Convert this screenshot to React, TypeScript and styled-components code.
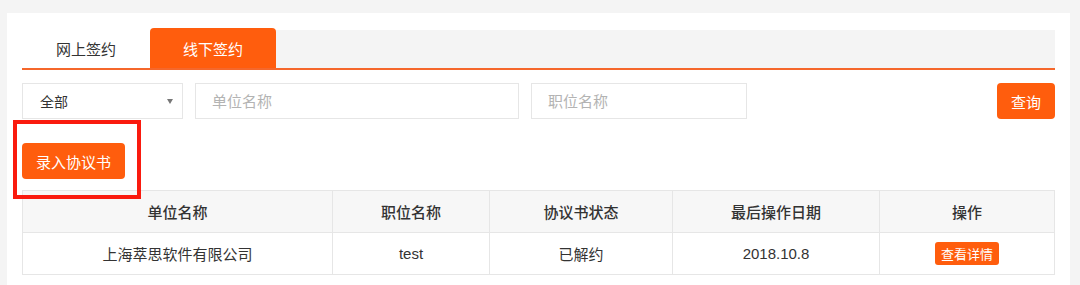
import React, { useState } from 'react';
import styled, { createGlobalStyle } from 'styled-components';

const ORANGE = '#ff5d0d';
const FONT = '"Liberation Sans", "Noto Sans CJK SC", sans-serif';

const GlobalStyle = createGlobalStyle`
  html, body {
    margin: 0;
    padding: 0;
    background: #f4f4f4;
    font-family: ${FONT};
  }
`;

const Page = styled.div`
  padding: 13px 10px 0 7px;
`;

const Card = styled.div`
  background: #fff;
  padding: 15px 15px 12px 15px;
  min-height: 260px;
  box-sizing: border-box;
`;

const TabBar = styled.div`
  display: flex;
  align-items: flex-end;
  height: 40px;
  border-bottom: 2px solid #f5672b;
  background: linear-gradient(to bottom, #fff 0, #fff 2px, #f4f4f4 2px);
`;

const Tab = styled.div<{ active?: boolean }>`
  width: ${(p) => (p.active ? '126px' : '128px')};
  height: 40px;
  display: flex;
  align-items: center;
  justify-content: center;
  font-size: 15px;
  color: ${(p) => (p.active ? '#fff' : '#333')};
  background: ${(p) => (p.active ? ORANGE : '#fff')};
  border-radius: ${(p) => (p.active ? '4px 4px 0 0' : '0')};
  cursor: pointer;
`;

const FilterRow = styled.div`
  display: flex;
  align-items: center;
  gap: 12px;
  margin-top: 13px;
  height: 36px;
`;

const SelectBox = styled.div`
  width: 161px;
  height: 36px;
  box-sizing: border-box;
  border: 1px solid #e6e6e6;
  display: flex;
  align-items: center;
  justify-content: space-between;
  padding: 0 9px 0 17px;
  font-size: 14px;
  color: #333;
`;

const Caret = styled.span`
  width: 0;
  height: 0;
  border-left: 3.5px solid transparent;
  border-right: 3.5px solid transparent;
  border-top: 5px solid #777;
`;

const Input = styled.input<{ w: number }>`
  width: ${(p) => p.w}px;
  height: 36px;
  box-sizing: border-box;
  border: 1px solid #e6e6e6;
  padding: 0 16px;
  font-size: 15px;
  font-family: ${FONT};
  color: #333;
  outline: none;
  &::placeholder {
    color: #b3b3b3;
  }
`;

const Spacer = styled.div`
  flex: 1;
`;

const Button = styled.button<{ small?: boolean }>`
  border: none;
  background: ${ORANGE};
  color: #fff;
  font-family: ${FONT};
  font-size: ${(p) => (p.small ? '13px' : '15px')};
  height: ${(p) => (p.small ? '23px' : '36px')};
  padding: ${(p) => (p.small ? '0 6px' : '0 14px')};
  border-radius: ${(p) => (p.small ? '3px' : '4px')};
  cursor: pointer;
  white-space: nowrap;
`;

const ActionRow = styled.div`
  margin-top: 24px;
  display: flex;
`;

const Highlight = styled.div`
  position: relative;
  display: inline-flex;
`;

const HighlightFrame = styled.div`
  position: absolute;
  left: -9px;
  top: -23px;
  right: -16px;
  bottom: -20px;
  border: 4px solid #fa1a0e;
  pointer-events: none;
`;

const Table = styled.table`
  margin-top: 11px;
  width: 100%;
  border-collapse: collapse;
  font-size: 15px;
  color: #333;
  th,
  td {
    border: 1px solid #e6e6e6;
    text-align: center;
    height: 41px;
    padding: 0;
  }
  th {
    background: #f7f7f7;
    font-weight: 500;
    color: #333;
  }
`;

const columns = [
  { title: '单位名称', width: 310 },
  { title: '职位名称', width: 157 },
  { title: '协议书状态', width: 183 },
  { title: '最后操作日期', width: 207 },
  { title: '操作', width: 175 },
];

const rows = [
  { company: '上海萃思软件有限公司', position: 'test', status: '已解约', date: '2018.10.8' },
];

export default function App() {
  const [tab, setTab] = useState(1);

  return (
    <Page>
      <GlobalStyle />
      <Card>
        <TabBar>
          {['网上签约', '线下签约'].map((t, i) => (
            <Tab key={t} active={tab === i} onClick={() => setTab(i)}>
              {t}
            </Tab>
          ))}
        </TabBar>

        <FilterRow>
          <SelectBox>
            全部
            <Caret />
          </SelectBox>
          <Input w={324} placeholder="单位名称" />
          <Input w={216} placeholder="职位名称" />
          <Spacer />
          <Button>查询</Button>
        </FilterRow>

        <ActionRow>
          <Highlight>
            <Button>录入协议书</Button>
            <HighlightFrame />
          </Highlight>
        </ActionRow>

        <Table>
          <colgroup>
            {columns.map((c) => (
              <col key={c.title} style={{ width: c.width }} />
            ))}
          </colgroup>
          <thead>
            <tr>
              {columns.map((c) => (
                <th key={c.title}>{c.title}</th>
              ))}
            </tr>
          </thead>
          <tbody>
            {rows.map((r) => (
              <tr key={r.company}>
                <td>{r.company}</td>
                <td>{r.position}</td>
                <td>{r.status}</td>
                <td>{r.date}</td>
                <td>
                  <Button small>查看详情</Button>
                </td>
              </tr>
            ))}
          </tbody>
        </Table>
      </Card>
    </Page>
  );
}
